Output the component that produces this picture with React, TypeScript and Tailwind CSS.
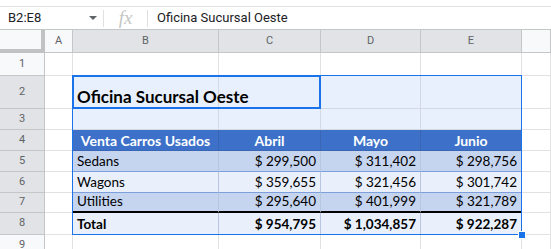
const colStart = ['col-start-1', 'col-start-2', 'col-start-3', 'col-start-4', 'col-start-5', 'col-start-6', 'col-start-7']
const rowStart = ['row-start-1', 'row-start-2', 'row-start-3', 'row-start-4', 'row-start-5', 'row-start-6', 'row-start-7', 'row-start-8', 'row-start-9', 'row-start-10']

const letters = ['', 'A', 'B', 'C', 'D', 'E', '']

// table contents, indexed by sheet row (1-based) and column (B..E)
const table: Record<number, string[]> = {
  2: ['Oficina Sucursal Oeste', '', '', ''],
  3: ['', '', '', ''],
  4: ['Venta Carros Usados', 'Abril', 'Mayo', 'Junio'],
  5: ['Sedans', '$ 299,500', '$ 311,402', '$ 298,756'],
  6: ['Wagons', '$ 359,655', '$ 321,456', '$ 301,742'],
  7: ['Utilities', '$ 295,640', '$ 401,999', '$ 321,789'],
  8: ['Total', '$ 954,795', '$ 1,034,857', '$ 922,287'],
}

function headerCell(r: number, c: number) {
  const selected = (r === 0 && c >= 2 && c <= 5) || (c === 0 && r >= 2 && r <= 8)
  if (r === 0 && c === 0) {
    return <div key="corner" className={`${rowStart[0]} ${colStart[0]} bg-[#f8f9fa] border-r-4 border-b-4 border-[#c0c2c4]`} />
  }
  const label = r === 0 ? letters[c] : String(r)
  return (
    <div
      key={`h${r}-${c}`}
      className={`${rowStart[r]} ${colStart[c]} flex items-center justify-center border-r border-b border-[#c4c7c5] text-[11px] text-[#5f6368] ${selected ? 'bg-[#e1e3e6]' : 'bg-[#f8f9fa]'}`}
    >
      {label}
    </div>
  )
}

function bodyCell(r: number, c: number) {
  const inTable = r >= 2 && r <= 8 && c >= 2 && c <= 5
  let cls = 'bg-white border-[#e2e2e3]'
  let text = ''
  let align = 'justify-start'
  let font = 'text-[13.5px] text-black'
  let pad = 'pb-px'

  if (inTable) {
    text = table[r][c - 2]
    if (r <= 3) cls = 'bg-[#e8f0fd] border-[#d3d9e2]'
    else if (r === 4) cls = 'bg-[#3d71c9] border-[#3a66b3]'
    else if (r === 5 || r === 7) cls = 'bg-[#c5d4ef] border-[#7da0dd]'
    else cls = 'bg-[#e9f0fc] border-[#7da0dd]'
    if (r === 2) {
      font = 'text-[17px] font-bold text-black'
      pad = 'pb-[3px]'
    }
    if (r === 4) {
      font = 'text-[14px] font-bold text-white'
      align = 'justify-center'
    }
    if (r >= 5 && c >= 3) align = 'justify-end'
    if (r === 8) font = 'text-[13.5px] font-bold text-black'
  }

  const vline = inTable && r >= 5 ? 'border-r-[#b9c6df]' : ''
  const bottom = inTable && r === 7 ? 'border-b-2 border-b-black' : 'border-b'
  const overflow = r === 2 && c === 2 ? 'overflow-visible z-10' : 'overflow-hidden'

  return (
    <div
      key={`c${r}-${c}`}
      className={`${rowStart[r]} ${colStart[c]} flex items-end leading-[17px] px-[4px] whitespace-nowrap border-r ${pad} ${overflow} ${bottom} ${cls} ${vline} ${align} ${font}`}
      style={{ fontFamily: 'Lato, "Open Sans", sans-serif' }}
    >
      {text}
    </div>
  )
}

export default function App() {
  const rows = Array.from({ length: 10 }, (_, i) => i)
  const cols = Array.from({ length: 7 }, (_, i) => i)

  return (
    <div className="w-[551px] h-[249px] overflow-hidden bg-white" style={{ fontFamily: 'Roboto, Arial, sans-serif' }}>
      {/* Formula bar */}
      <div className="h-[6px]" />
      <div className="flex items-center h-[23px] border-t border-[#e0e0e0] text-[13px] text-[#202124]">
        <div className="flex items-center w-[103px] pl-[8px] pr-[4px]">
          <span className="flex-1">B2:E8</span>
          <span className="w-0 h-0 border-l-[4px] border-r-[4px] border-t-[4px] border-l-transparent border-r-transparent border-t-[#5f6368] mr-[2px]" />
        </div>
        <div className="w-px h-[17px] bg-[#e0e0e0]" />
        <div className="w-[43px] flex justify-center text-[19px] text-[#c4c7c5] italic" style={{ fontFamily: '"Liberation Serif", serif' }}>
          fx
        </div>
        <div className="w-px h-[17px] bg-[#e0e0e0]" />
        <div className="pl-[9px]">Oficina Sucursal Oeste</div>
      </div>

      {/* Sheet grid */}
      <div className="grid grid-cols-[45px_28px_146px_102px_100px_101px_1fr] grid-rows-[23px_23px_33px_21px_21px_21px_21px_20px_22px_22px] border-t border-[#c4c7c5]">
        {rows.map((r) =>
          cols.map((c) => (r === 0 || c === 0 ? headerCell(r, c) : bodyCell(r, c)))
        )}

        {/* selection range B2:E8 */}
        <div className={`${rowStart[2]} ${colStart[2]} row-end-10 col-end-7 -mt-px -ml-px relative z-20 border border-[#1a73e8] pointer-events-none`}>
          <div className="absolute -right-[5px] -bottom-[5px] w-[8px] h-[8px] bg-[#1a73e8] border border-white" />
        </div>
        {/* active cell B2 (merged B2:C2) */}
        <div className={`${rowStart[2]} ${colStart[2]} row-end-4 col-end-5 -mt-px -ml-px z-20 border-2 border-[#1a73e8] pointer-events-none`} />
      </div>
    </div>
  )
}
